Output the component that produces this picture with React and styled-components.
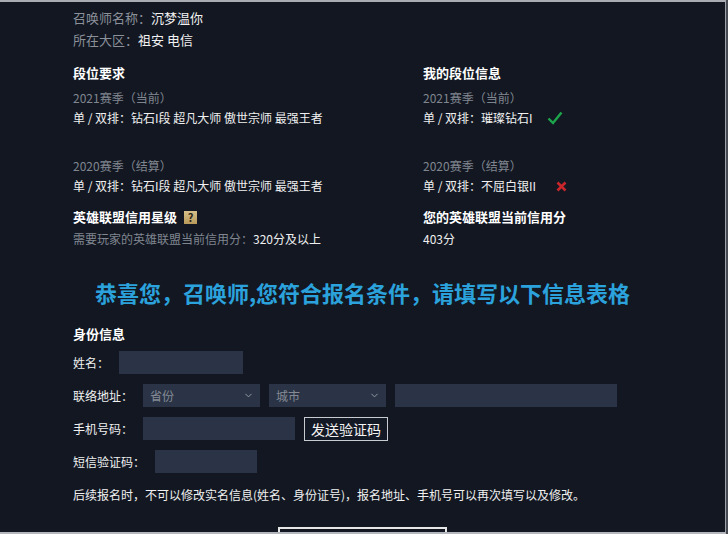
import React from "react";
import styled, { createGlobalStyle } from "styled-components";
import { ChevronDown } from "lucide-react";

const GlobalStyle = createGlobalStyle`
  html, body {
    margin: 0;
    padding: 0;
    background: #454a52;
  }
  body {
    font-family: "Noto Sans CJK SC", "Noto Sans", sans-serif;
    overflow: hidden;
  }
`;

const Frame = styled.div`
  box-sizing: border-box;
  width: 726px;
  height: 534px;
  overflow: hidden;
  background: #121722;
  border-top: 2px solid #a9adb3;
  border-right: 1px solid #9ea3aa;
  border-bottom: 2px solid #b4b8be;
  color: #ececec;
  padding: 5px 0 0 73px;
`;

const InfoLine = styled.div`
  font-size: 13px;
  line-height: 22px;
  color: #8b9099;

  b {
    font-weight: 400;
    color: #f2f2f2;
  }
`;

const Columns = styled.div`
  display: grid;
  grid-template-columns: 350px 1fr;
  margin-top: 12px;
`;

const Column = styled.div`
  display: flex;
  flex-direction: column;
`;

const SectionTitle = styled.div`
  display: flex;
  align-items: center;
  font-size: 13px;
  font-weight: 700;
  line-height: 20px;
  color: #ffffff;
  margin-top: ${(p) => p.$top || 0}px;
`;

const Season = styled.div`
  font-size: 12px;
  line-height: 20px;
  color: #80868f;
  margin-top: ${(p) => p.$top || 0}px;
`;

const Rank = styled.div`
  display: flex;
  align-items: center;
  font-size: 12px;
  line-height: 20px;
  color: #f0f0f0;
  margin-bottom: ${(p) => p.$bottom || 0}px;
`;

const Muted = styled.span`
  color: #80868f;
  margin-right: 4px;
`;

const StatusIcon = styled.svg`
  margin-left: ${(p) => p.$gap}px;
  flex-shrink: 0;
`;

const HelpBadge = styled.span`
  display: inline-flex;
  align-items: center;
  justify-content: center;
  width: 13px;
  height: 13px;
  margin-left: 7px;
  background: linear-gradient(#d6c08a, #b89a5a);
  color: #2a2416;
  font-size: 11px;
  font-weight: 700;
  line-height: 1;
`;

const Banner = styled.h2`
  margin: 28px 0 0 -73px;
  text-align: center;
  font-size: 22px;
  line-height: 30px;
  font-weight: 700;
  color: #2ba2dc;
`;

const FormTitle = styled(SectionTitle)`
  margin-top: 17px;
  margin-bottom: 7px;
`;

const FormRows = styled.div`
  display: flex;
  flex-direction: column;
  gap: 10px;
`;

const FieldRow = styled.div`
  display: flex;
  align-items: center;
  gap: 9px;
  height: 23px;
`;

const Label = styled.label`
  font-size: 12px;
  color: #f0f0f0;
  margin-right: 1px;
`;

const TextBox = styled.div`
  width: ${(p) => p.$w}px;
  height: 23px;
  background: #2a3446;
`;

const SelectBox = styled.div`
  box-sizing: border-box;
  display: flex;
  align-items: center;
  justify-content: space-between;
  width: 117px;
  height: 23px;
  padding: 0 6px 0 7px;
  background: #2a3446;
  color: #858b95;
  font-size: 12px;
`;

const SendButton = styled.button`
  box-sizing: border-box;
  width: 84px;
  height: 24px;
  padding: 0;
  background: #141a25;
  border: 1px solid #c8cbd0;
  color: #f4f4f4;
  font-family: inherit;
  font-size: 14px;
`;

const Notice = styled.p`
  margin: 12px 0 0;
  font-size: 12px;
  line-height: 20px;
  color: #f0f0f0;
`;

const SubmitButton = styled.button`
  display: block;
  width: 169px;
  height: 40px;
  margin: 22px 0 0 205px;
  background: transparent;
  border: 2px solid #e6e6e6;
`;

const Check = () => (
  <StatusIcon $gap={14} width="16" height="14" viewBox="0 0 16 14">
    <path d="M1.5 7.5 L6 12 L14.5 1.5" fill="none" stroke="#1da54b" strokeWidth="2.4" />
  </StatusIcon>
);

const Cross = () => (
  <StatusIcon $gap={20} width="11" height="11" viewBox="0 0 11 11">
    <path d="M1.5 1.5 L9.5 9.5 M9.5 1.5 L1.5 9.5" stroke="#c9262c" strokeWidth="2.6" />
  </StatusIcon>
);

export default function App() {
  return (
    <>
      <GlobalStyle />
      <Frame>
        <InfoLine>
          召唤师名称：<b>沉梦温你</b>
        </InfoLine>
        <InfoLine>
          所在大区：<b>祖安 电信</b>
        </InfoLine>

        <Columns>
          <Column>
            <SectionTitle>段位要求</SectionTitle>
            <Season $top={5}>2021赛季（当前）</Season>
            <Rank $bottom={28}>单 / 双排：钻石I段 超凡大师 傲世宗师 最强王者</Rank>
            <Season>2020赛季（结算）</Season>
            <Rank>单 / 双排：钻石I段 超凡大师 傲世宗师 最强王者</Rank>
            <SectionTitle $top={11}>
              英雄联盟信用星级
              <HelpBadge>?</HelpBadge>
            </SectionTitle>
            <Season $top={2}>
              需要玩家的英雄联盟当前信用分：
              <span style={{ color: "#f0f0f0" }}>320分及以上</span>
            </Season>
          </Column>
          <Column>
            <SectionTitle>我的段位信息</SectionTitle>
            <Season $top={5}>2021赛季（当前）</Season>
            <Rank $bottom={28}>
              单 / 双排：璀璨钻石I
              <Check />
            </Rank>
            <Season>2020赛季（结算）</Season>
            <Rank>
              单 / 双排：不屈白银II
              <Cross />
            </Rank>
            <SectionTitle $top={11}>您的英雄联盟当前信用分</SectionTitle>
            <Rank style={{ marginTop: 2 }}>403分</Rank>
          </Column>
        </Columns>

        <Banner>恭喜您，召唤师,您符合报名条件，请填写以下信息表格</Banner>

        <FormTitle>身份信息</FormTitle>
        <FormRows>
          <FieldRow>
            <Label>姓名：</Label>
            <TextBox $w={124} />
          </FieldRow>
          <FieldRow>
            <Label>联络地址：</Label>
            <SelectBox>
              省份
              <ChevronDown size={11} color="#9aa0a8" strokeWidth={2} />
            </SelectBox>
            <SelectBox>
              城市
              <ChevronDown size={11} color="#9aa0a8" strokeWidth={2} />
            </SelectBox>
            <TextBox $w={222} />
          </FieldRow>
          <FieldRow>
            <Label>手机号码：</Label>
            <TextBox $w={152} />
            <SendButton>发送验证码</SendButton>
          </FieldRow>
          <FieldRow>
            <Label>短信验证码：</Label>
            <TextBox $w={102} />
          </FieldRow>
        </FormRows>

        <Notice>
          后续报名时，不可以修改实名信息(姓名、身份证号)，报名地址、手机号可以再次填写以及修改。
        </Notice>
        <SubmitButton />
      </Frame>
    </>
  );
}
